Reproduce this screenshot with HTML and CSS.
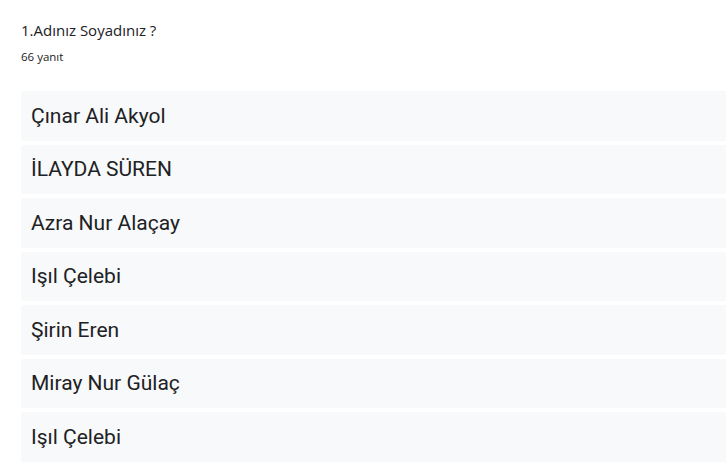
FILE: index.html
```html
<!DOCTYPE html>
<html lang="tr">
<head>
<meta charset="utf-8">
<link rel="stylesheet" href="styles.css">
</head>
<body>
<div class="page">
  <div class="question">1.Adınız Soyadınız ?</div>
  <div class="count">66 yanıt</div>
  <div class="answers">
    <div class="answer">Çınar Ali Akyol</div>
    <div class="answer">İLAYDA SÜREN</div>
    <div class="answer">Azra Nur Alaçay</div>
    <div class="answer">Işıl Çelebi</div>
    <div class="answer">Şirin Eren</div>
    <div class="answer">Miray Nur Gülaç</div>
    <div class="answer">Işıl Çelebi</div>
  </div>
</div>
</body>
</html>
```
FILE: styles.css
```css
html, body {
  margin: 0;
  padding: 0;
  background: #ffffff;
}
.page {
  padding: 20px 0 0 21px;
  font-family: Roboto, "Open Sans", sans-serif;
  color: #202124;
}
.question {
  font-family: "Open Sans", Roboto, sans-serif;
  font-size: 15px;
  line-height: 20px;
}
.count {
  font-family: "Open Sans", Roboto, sans-serif;
  font-size: 11.5px;
  line-height: 16px;
  margin-top: 9px;
}
.answers {
  margin-top: 26px;
  display: flex;
  flex-direction: column;
  gap: 4px;
}
.answer {
  height: 49.5px;
  display: flex;
  align-items: center;
  padding-left: 10px;
  background: #f8f9fa;
  font-size: 21px;
  border-radius: 2px 0 0 2px;
}
```
